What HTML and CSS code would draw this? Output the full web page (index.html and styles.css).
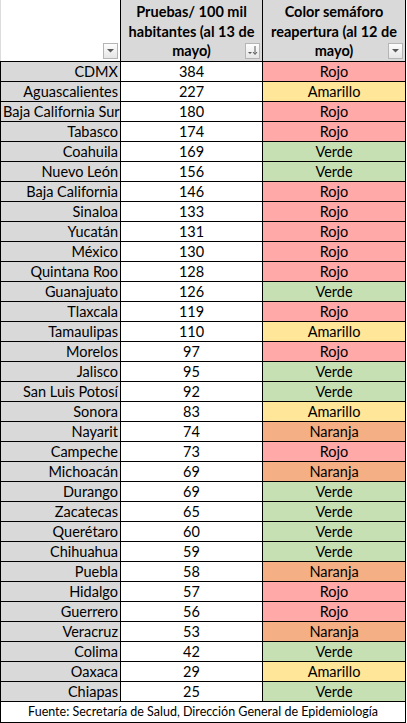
FILE: index.html
```html
<!DOCTYPE html>
<html>
<head>
    <title>Pruebas por estado</title>
    <meta charset="utf-8">
    <link rel="stylesheet" href="styles.css">
</head>
<body>
<table class="sheet">
    <colgroup>
        <col class="col-estado">
        <col class="col-pruebas">
        <col class="col-color">
    </colgroup>
    <thead>
        <tr>
            <th class="head-blank">
                <span class="filter"><svg width="9" height="9" viewBox="0 0 9 9"><path d="M1 3 H8 L4.5 6.5 Z" fill="#595959"/></svg></span>
            </th>
            <th class="head">Pruebas/ 100 mil habitantes (al 13 de mayo)
                <span class="filter"><svg width="11" height="11" viewBox="0 0 11 11"><path d="M1 7 H5 L3 9 Z" fill="#595959"/><path d="M8 1 V9 M6 7 L8 9.5 L10 7" stroke="#595959" stroke-width="1" fill="none"/></svg></span>
            </th>
            <th class="head">Color semáforo reapertura (al 12 de mayo)
                <span class="filter"><svg width="9" height="9" viewBox="0 0 9 9"><path d="M1 3 H8 L4.5 6.5 Z" fill="#595959"/></svg></span>
            </th>
        </tr>
    </thead>
    <tbody id="rows"></tbody>
    <tfoot>
        <tr>
            <td colspan="3" class="fuente">Fuente: Secretaría de Salud, Dirección General de Epidemiología</td>
        </tr>
    </tfoot>
</table>

<script>
const datos = [
    ["CDMX", 384, "Rojo"],
    ["Aguascalientes", 227, "Amarillo"],
    ["Baja California Sur", 180, "Rojo"],
    ["Tabasco", 174, "Rojo"],
    ["Coahuila", 169, "Verde"],
    ["Nuevo León", 156, "Verde"],
    ["Baja California", 146, "Rojo"],
    ["Sinaloa", 133, "Rojo"],
    ["Yucatán", 131, "Rojo"],
    ["México", 130, "Rojo"],
    ["Quintana Roo", 128, "Rojo"],
    ["Guanajuato", 126, "Verde"],
    ["Tlaxcala", 119, "Rojo"],
    ["Tamaulipas", 110, "Amarillo"],
    ["Morelos", 97, "Rojo"],
    ["Jalisco", 95, "Verde"],
    ["San Luis Potosí", 92, "Verde"],
    ["Sonora", 83, "Amarillo"],
    ["Nayarit", 74, "Naranja"],
    ["Campeche", 73, "Rojo"],
    ["Michoacán", 69, "Naranja"],
    ["Durango", 69, "Verde"],
    ["Zacatecas", 65, "Verde"],
    ["Querétaro", 60, "Verde"],
    ["Chihuahua", 59, "Verde"],
    ["Puebla", 58, "Naranja"],
    ["Hidalgo", 57, "Rojo"],
    ["Guerrero", 56, "Rojo"],
    ["Veracruz", 53, "Naranja"],
    ["Colima", 42, "Verde"],
    ["Oaxaca", 29, "Amarillo"],
    ["Chiapas", 25, "Verde"]
];

// Construit les lignes du tableau
const tbody = document.getElementById("rows");
datos.forEach(([estado, pruebas, color]) => {
    const tr = document.createElement("tr");
    tr.innerHTML = `<td class="estado">${estado}</td>` +
        `<td class="pruebas">${pruebas}</td>` +
        `<td class="color ${color.toLowerCase()}">${color}</td>`;
    tbody.appendChild(tr);
});
</script>
</body>
</html>
```

FILE: styles.css
```css
body {
    margin: 0;
    background-color: #ffffff;
    font-family: Lato, "Liberation Sans", sans-serif;
    color: #000000;
}
.sheet {
    border-collapse: collapse;
    table-layout: fixed;
    width: 405px;
    font-size: 14.5px;
}
.col-estado {
    width: 120px;
}
.col-pruebas {
    width: 142px;
}
.col-color {
    width: 143px;
}
th, td {
    padding: 0 2px;
    border: 1px solid #000000;
    white-space: nowrap;
    overflow: hidden;
}
thead th {
    height: 58px;
    position: relative;
    border-top: none;
    vertical-align: top;
}
.head {
    background-color: #d9d9d9;
    font-weight: bold;
    font-size: 14.5px;
    white-space: normal;
    line-height: 19.5px;
    padding: 2px 1px 0 1px;
}
.head-blank {
    background-color: #ffffff;
    border-left: 1px solid #dcdcdc;
}
tbody tr {
    height: 20px;
}
tbody td {
    height: 19px;
    line-height: 19px;
}
.estado {
    background-color: #d9d9d9;
    text-align: right;
}
.pruebas {
    background-color: #ffffff;
    text-align: center;
}
.color {
    text-align: center;
}
.rojo {
    background-color: #ffa9a9;
}
.amarillo {
    background-color: #ffe699;
}
.verde {
    background-color: #c6e0b4;
}
.naranja {
    background-color: #f4b084;
}
.fuente {
    height: 20px;
    text-align: center;
    font-size: 12.5px;
    background-color: #ffffff;
}
/* Boutons de filtre (coin bas-droit des en-têtes) */
.filter {
    position: absolute;
    right: 2px;
    bottom: 2px;
    width: 13px;
    height: 14px;
    border: 1px solid #b5b5b5;
    background: linear-gradient(#fdfdfd, #e6e6e6);
    display: flex;
    align-items: center;
    justify-content: center;
}
```
